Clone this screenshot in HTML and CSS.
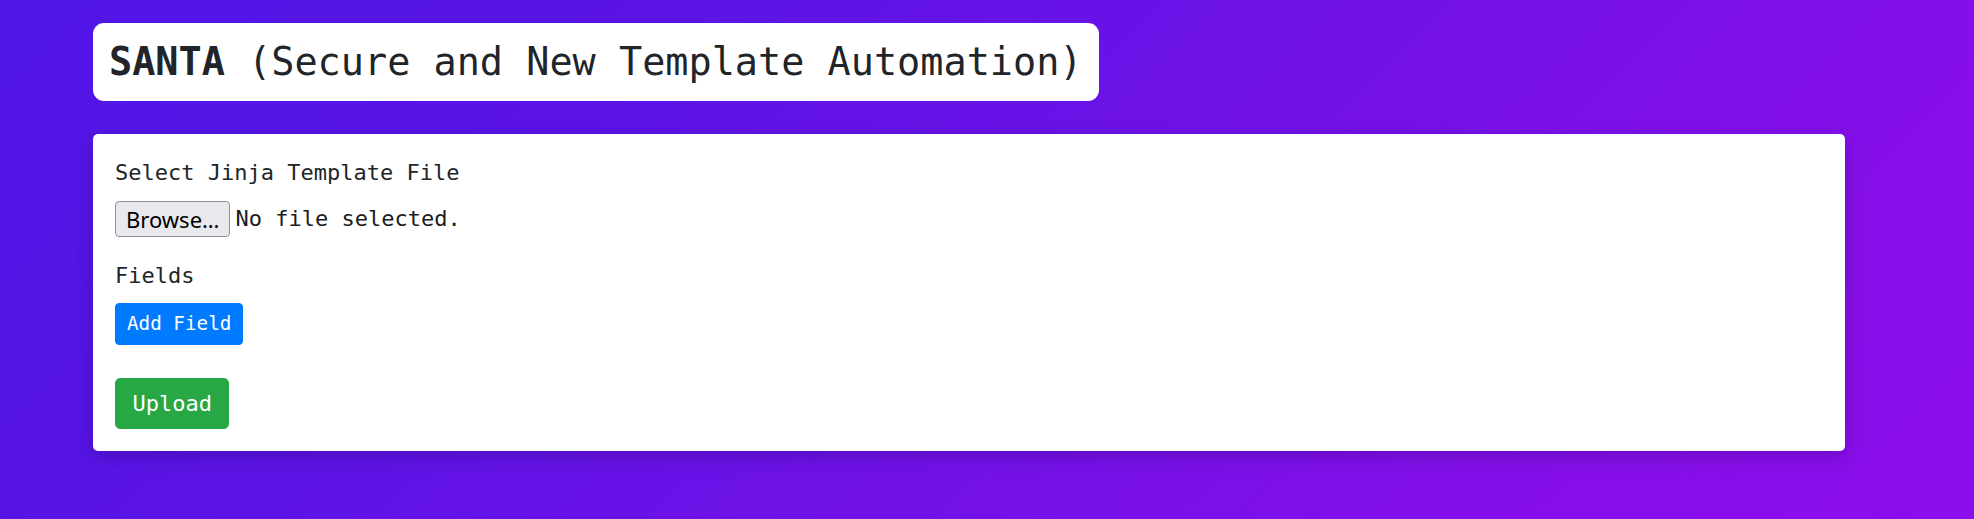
FILE: index.html
```html
<!DOCTYPE html>
<html lang="en">
<head>
<meta charset="utf-8">
<title>SANTA</title>
<link rel="stylesheet" href="styles.css">
</head>
<body>
<main class="page">
  <h3 class="title"><strong>SANTA</strong> (Secure and New Template Automation)</h3>
  <div class="card">
    <form class="card-body">
      <div class="form-group">
        <label class="label">Select Jinja Template File</label>
        <div class="file-row">
          <button type="button" class="file-btn">Browse…</button>
          <span class="file-name">No file selected.</span>
        </div>
      </div>
      <div class="form-group fields-group">
        <label class="label">Fields</label>
        <div class="fields">
          <button type="button" class="btn btn-sm btn-primary">Add Field</button>
        </div>
      </div>
      <button type="button" class="btn btn-success">Upload</button>
    </form>
  </div>
</main>
</body>
</html>
```

FILE: styles.css
```css
html, body {
  margin: 0;
  padding: 0;
}

body {
  min-height: 100vh;
  overflow: hidden;
  background: linear-gradient(135deg, #5116e6 0%, #5514e4 20%, #6c12e7 50%, #850fe9 80%, #8b0eeb 100%);
  font-family: "DejaVu Sans Mono", monospace;
  font-size: 22px;
  line-height: 1.5;
  color: #212529;
}

.page {
  display: flex;
  flex-direction: column;
  align-items: flex-start;
  padding: 23px 129px 0 93px;
  gap: 33px;
}

.title {
  margin: 0;
  background: #fff;
  border-radius: 11px;
  padding: 16px 16px;
  font-size: 38.5px;
  line-height: 46px;
  font-weight: 400;
  color: #212529;
  white-space: nowrap;
}

.title strong {
  font-weight: 700;
}

.card {
  align-self: stretch;
  background: #fff;
  border-radius: 5px;
  box-shadow: 0 6px 18px rgba(20, 0, 60, 0.22);
}

.card-body {
  padding: 22px 22px 22px;
  display: flex;
  flex-direction: column;
  align-items: flex-start;
}

.form-group {
  display: flex;
  flex-direction: column;
  align-items: flex-start;
  margin-bottom: 22px;
}

.fields-group {
  margin-bottom: 33px;
}

.label {
  margin-bottom: 11px;
}

.file-row {
  display: flex;
  align-items: center;
  height: 37px;
}

.file-btn {
  height: 36px;
  padding: 0 10px;
  margin: 0 5px 0 0;
  background: #e9e9ed;
  border: 1px solid #8f8f9d;
  border-radius: 4px;
  font-family: "Noto Sans", "Open Sans", sans-serif;
  font-size: 22px;
  color: #000;
  line-height: 1;
}

.file-name {
  color: #1b1b1b;
}

.btn {
  display: inline-block;
  border: 1px solid transparent;
  font-family: "DejaVu Sans Mono", monospace;
  font-size: 22px;
  line-height: 1.5;
  padding: 8px 16.5px;
  border-radius: 5px;
  color: #fff;
  cursor: pointer;
}

.btn-sm {
  font-size: 19.25px;
  padding: 5.5px 11px;
  border-radius: 4px;
}

.btn-primary {
  background: #007bff;
  border-color: #007bff;
}

.btn-success {
  background: #28a745;
  border-color: #28a745;
}
```
